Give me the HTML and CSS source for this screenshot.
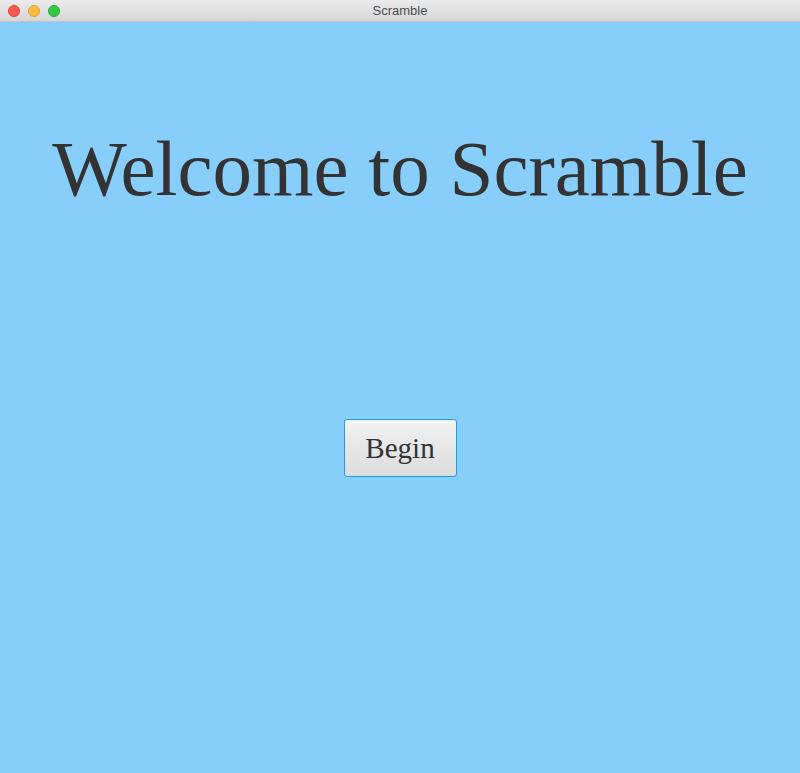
FILE: index.html
```html
<!DOCTYPE html>
<html>
<head>
<meta charset="utf-8">
<link rel="stylesheet" href="styles.css">
</head>
<body>
<div class="window">
  <div class="titlebar">
    <div class="lights">
      <span class="light red"></span>
      <span class="light yellow"></span>
      <span class="light green"></span>
    </div>
    <div class="title">Scramble</div>
  </div>
  <div class="content">
    <h1 class="heading">Welcome to Scramble</h1>
    <button class="begin">Begin</button>
  </div>
</div>
</body>
</html>
```
FILE: styles.css
```css
html, body {
  margin: 0;
  padding: 0;
}
body {
  width: 800px;
  height: 773px;
  overflow: hidden;
  background: #87cefa;
}
.window {
  display: flex;
  flex-direction: column;
  height: 773px;
}
.titlebar {
  height: 21px;
  flex: none;
  background: linear-gradient(#ececec, #d6d6d6);
  border-bottom: 1px solid #c4c4c4;
  display: flex;
  align-items: center;
  position: relative;
}
.lights {
  display: flex;
  gap: 8px;
  padding-left: 8px;
}
.light {
  width: 12px;
  height: 12px;
  border-radius: 50%;
  box-sizing: border-box;
}
.red { background: #fc5753; border: 1px solid #df3d38; }
.yellow { background: #fdbc40; border: 1px solid #de9f26; }
.green { background: #33c748; border: 1px solid #27aa35; }
.title {
  position: absolute;
  left: 0;
  right: 0;
  top: 0;
  line-height: 21px;
  text-align: center;
  font-family: "Liberation Sans", Arial, sans-serif;
  font-size: 13px;
  color: #4d4d4d;
}
.content {
  flex: 1;
  display: flex;
  flex-direction: column;
  align-items: center;
}
.heading {
  margin: 99px 0 0 0;
  font-family: "Liberation Serif", "Times New Roman", serif;
  font-weight: normal;
  font-size: 79px;
  line-height: 96px;
  color: #333333;
  letter-spacing: 0;
}
.begin {
  margin-top: 202px;
  width: 113px;
  height: 58px;
  box-sizing: border-box;
  border: 1px solid #1aa0dc;
  border-radius: 3px;
  background: linear-gradient(#f2f2f2, #dcdcdc);
  font-family: "Liberation Serif", "Times New Roman", serif;
  font-size: 29px;
  color: #333333;
  padding: 0;
}
```
